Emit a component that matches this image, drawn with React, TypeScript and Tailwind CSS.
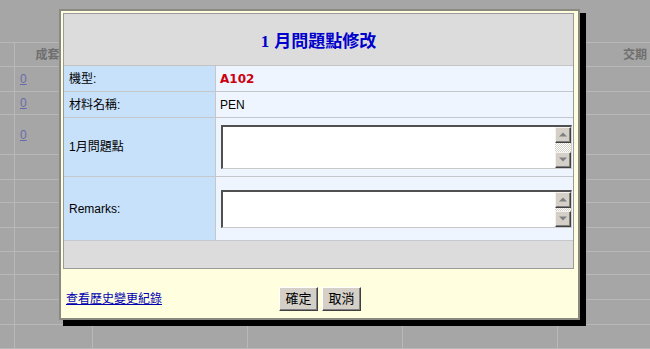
import React from "react";

const rowHeights = [24, 25, 23, 40, 25, 23, 25, 24, 23, 25, 25, 24];
const colWidths = [15, 78, 155, 155, 155, 155];

function ScrollBtn({ up }: { up: boolean }) {
  return (
    <div className="w-[16px] h-[16px] bg-[#d4d0c8] border border-t-[#f4f2ee] border-l-[#f4f2ee] border-r-[#404040] border-b-[#404040] shadow-[inset_-1px_-1px_0_#808080] flex items-center justify-center">
      <svg width="8" height="5" viewBox="0 0 8 5">
        {up ? (
          <polygon points="0,4.5 8,4.5 4,0.5" fill="#808080" />
        ) : (
          <polygon points="0,0.5 8,0.5 4,4.5" fill="#808080" />
        )}
      </svg>
    </div>
  );
}

function FakeTextarea({ h }: { h: number }) {
  return (
    <div
      className="w-[351px] flex bg-white border-t-2 border-l-2 border-t-[#505050] border-l-[#505050] border-b border-r border-b-[#c8c8c8] border-r-[#d4d0c8]"
      style={{ height: h }}
    >
      <div className="flex-1" />
      <div className="w-[16px] flex flex-col">
        <ScrollBtn up />
        <div className="flex-1 bg-[repeating-conic-gradient(#d4d0c8_0_25%,#ffffff_0_50%)] bg-[length:2px_2px]" />
        <ScrollBtn up={false} />
      </div>
    </div>
  );
}

export default function App() {
  const font = "font-['Liberation_Sans','Noto_Sans_CJK_TC',sans-serif]";
  return (
    <div className={`relative w-[650px] h-[349px] overflow-hidden bg-[#a6a6a6] ${font} text-[12px]`}>
      {/* background page */}
      <div className="h-[43px] border-b border-[#b8b8b8]" />
      {rowHeights.map((h, ri) => (
        <div key={ri} className="flex border-b border-[#b8b8b8]" style={{ height: h }}>
          {colWidths.map((w, ci) => (
            <div
              key={ci}
              className="shrink-0 border-r border-[#b8b8b8] flex items-center"
              style={{ width: w }}
            >
              {ri === 0 && ci === 1 && (
                <span className="w-full text-center font-bold text-[#6f6f6f]">成套數</span>
              )}
              {ri === 0 && ci === 5 && (
                <span className="w-full text-center font-bold text-[#6f6f6f]">交期</span>
              )}
              {ri >= 1 && ri <= 3 && ci === 1 && (
                <span className="pl-[5px] text-[#6a6aa6] underline">0</span>
              )}
            </div>
          ))}
        </div>
      ))}

      {/* modal */}
      <div className="absolute left-[59px] top-[9px] w-[521px] h-[311px] border-2 border-[#8a8a80] bg-[#ffffe0] pt-[2px] pl-[2px] pr-[4px] shadow-[5px_5px_0_1px_#000]">
        <div className="w-[511px] border border-[#9a9a9a] bg-[#dcdcdc]">
          <div className="h-[52px] border-b border-[#c4c4c4] flex items-center justify-center pt-[4px]">
            <span className="text-[17px] font-bold text-[#0000cc] font-['Liberation_Serif','Noto_Sans_CJK_TC',serif]">
              <span className="mr-[5px]">1</span>月問題點修改
            </span>
          </div>
          <div className="flex h-[26px] border-b border-[#c4c8cc]">
            <div className="w-[152px] border-r border-[#c4c8cc] bg-[#c8e1fb] flex items-center pl-[5px] text-black">
              機型:
            </div>
            <div className="flex-1 bg-[#eef5fe] flex items-center pl-[4px]">
              <span className="font-bold text-[#cc0010] font-['DejaVu_Sans',sans-serif] text-[12px]">A102</span>
            </div>
          </div>
          <div className="flex h-[26px] border-b border-[#c4c8cc]">
            <div className="w-[152px] border-r border-[#c4c8cc] bg-[#c8e1fb] flex items-center pl-[5px] text-black">
              材料名稱:
            </div>
            <div className="flex-1 bg-[#eef5fe] flex items-center pl-[4px] text-black">PEN</div>
          </div>
          <div className="flex h-[59px] border-b border-[#c4c8cc]">
            <div className="w-[152px] border-r border-[#c4c8cc] bg-[#c8e1fb] flex items-center pl-[5px] text-black">
              1月問題點
            </div>
            <div className="flex-1 bg-[#eef5fe] flex items-center pl-[5px] pb-[1px]">
              <FakeTextarea h={44} />
            </div>
          </div>
          <div className="flex h-[64px] border-b border-[#c4c8cc]">
            <div className="w-[152px] border-r border-[#c4c8cc] bg-[#c8e1fb] flex items-center pl-[5px] text-black">
              Remarks:
            </div>
            <div className="flex-1 bg-[#eef5fe] flex items-center pl-[5px]">
              <FakeTextarea h={38} />
            </div>
          </div>
          <div className="h-[27px]" />
        </div>
        <div className="grid grid-cols-[1fr_auto_1fr] items-center h-[49px] pt-[10px] pl-[3px]">
          <a className="text-[#0000b0] underline cursor-pointer">查看歷史變更紀錄</a>
          <div className="flex gap-[4px]">
            <button className="w-[39px] h-[24px] bg-[#d4d0c8] border border-t-white border-l-white border-r-[#404040] border-b-[#404040] shadow-[inset_-1px_-1px_0_#808080] text-[13px] text-black leading-none">
              確定
            </button>
            <button className="w-[39px] h-[24px] bg-[#d4d0c8] border border-t-white border-l-white border-r-[#404040] border-b-[#404040] shadow-[inset_-1px_-1px_0_#808080] text-[13px] text-black leading-none">
              取消
            </button>
          </div>
          <div />
        </div>
      </div>
    </div>
  );
}
